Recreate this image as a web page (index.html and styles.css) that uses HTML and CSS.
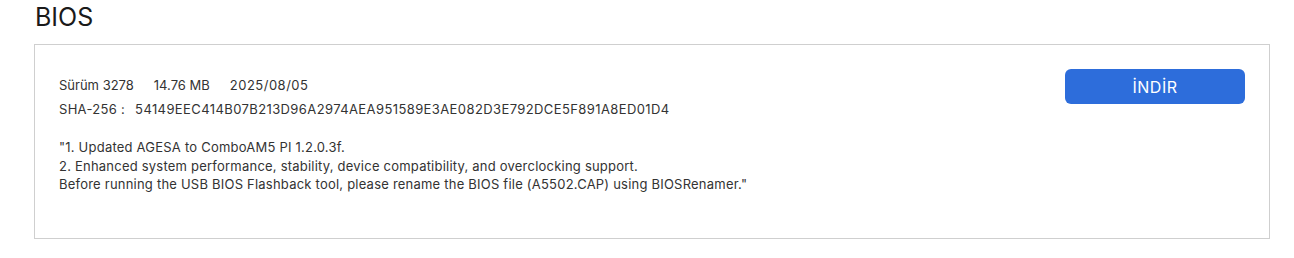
FILE: index.html
```html
<!DOCTYPE html>
<html lang="tr">
<head>
<meta charset="utf-8">
<link rel="stylesheet" href="styles.css">
</head>
<body>
<section class="section">
  <h2 class="title">BIOS</h2>
  <div class="card">
    <div class="info">
      <div class="meta">
        <span>Sürüm 3278</span>
        <span>14.76 MB</span>
        <span class="date">2025/08/05</span>
      </div>
      <div class="sha"><span class="sha-label">SHA-256 :</span><span class="sha-value">54149EEC414B07B213D96A2974AEA951589E3AE082D3E792DCE5F891A8ED01D4</span></div>
      <div class="desc">"1. Updated AGESA to ComboAM5 PI 1.2.0.3f.<br>2. Enhanced system performance, stability, device compatibility, and overclocking support.<br>Before running the USB BIOS Flashback tool, please rename the BIOS file (A5502.CAP) using BIOSRenamer."</div>
    </div>
    <button class="download">İNDİR</button>
  </div>
</section>
</body>
</html>
```
FILE: styles.css
```css
* { box-sizing: border-box; }
body {
  margin: 0;
  background: #fff;
  font-family: Inter, "Open Sans", "Liberation Sans", sans-serif;
  color: #333;
}
.section {
  padding: 0 24px 0 34px;
}
.title {
  margin: 0;
  height: 44px;
  padding-top: 2px;
  padding-left: 1px;
  font-size: 25px;
  font-weight: 400;
  line-height: 30px;
  color: #1a1a1a;
}
.card {
  border: 1px solid #cfcfcf;
  height: 195px;
  padding: 24px 24px 0 24px;
  display: flex;
  justify-content: space-between;
  align-items: flex-start;
}
.info {
  padding-top: 4px;
  font-size: 13px;
  line-height: 24px;
}
.meta {
  display: flex;
  gap: 20px;
}
.date {
  letter-spacing: 0.5px;
}
.sha {
  display: flex;
  margin-bottom: 16px;
  letter-spacing: 0.3px;
}
.sha-value {
  margin-left: 10px;
  letter-spacing: 0.4px;
}
.desc {
  padding-top: 1px;
  line-height: 18.5px;
  letter-spacing: 0.22px;
}
.download {
  width: 180px;
  height: 35px;
  border: none;
  border-radius: 6px;
  background: #2d6ddb;
  color: #fff;
  font-family: inherit;
  font-size: 16px;
  letter-spacing: 0.5px;
}
```
